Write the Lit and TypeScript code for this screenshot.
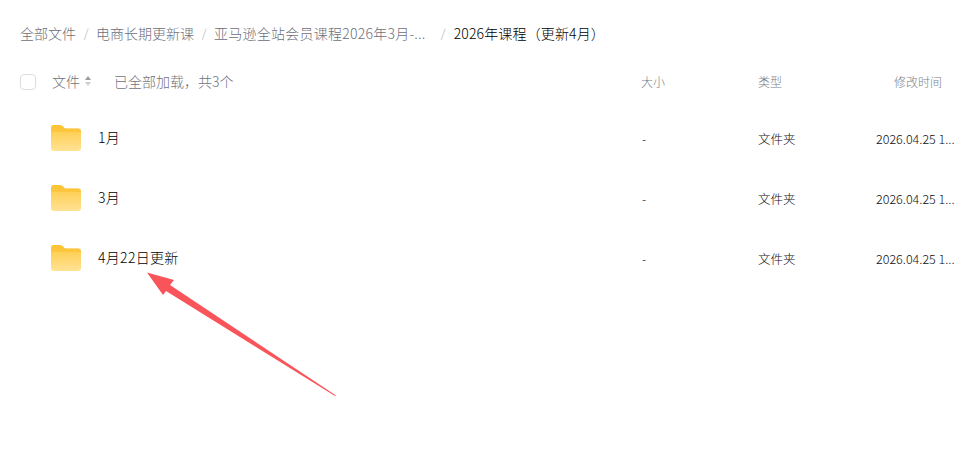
import { LitElement, html, css, svg } from "lit";
import { customElement } from "lit/decorators.js";

const crumbs = ["全部文件", "电商长期更新课", "亚马逊全站会员课程2026年3月-..."];
const rows = ["1月", "3月", "4月22日更新"];

const folder = svg`<svg class="folder" viewBox="0 0 30 26" width="30" height="26" aria-hidden="true">
  <defs>
    <linearGradient id="fg" x1="0" y1="0" x2="0" y2="1">
      <stop offset="0" stop-color="#fdc93f"/>
      <stop offset="1" stop-color="#ffe295"/>
    </linearGradient>
  </defs>
  <path d="M0 3 Q0 0 3 0 H9 Q11.500 0 13 2.500 Q13.500 3.500 15 3.500 H27 Q30 3.500 30 6.500 V23 Q30 26 27 26 H3 Q0 26 0 23 Z" fill="url(#fg)"/>
  <path d="M0 3 Q0 0 3 0 H9 Q11.500 0 13 2.500 Q13.500 3.500 15 3.500 H27 Q30 3.500 30 6.500 V7 H0 Z" fill="#fbbf2c" opacity=".55"/>
</svg>`;

@customElement("app-root")
export class AppRoot extends LitElement {
  static styles = css`
    :host {
      display: block;
      position: relative;
      width: 963px;
      height: 466px;
      overflow: hidden;
      background: #fff;
      font-family: "Noto Sans CJK SC", "Liberation Sans", sans-serif;
      font-weight: 300;
      color: #000;
    }
    .crumbs {
      display: flex;
      align-items: center;
      height: 20px;
      padding: 23px 0 0 20px;
      font-size: 14px;
      line-height: 20px;
      color: #6c707a;
      white-space: nowrap;
    }
    .sep {
      width: 20px;
      text-align: center;
      color: #a9acb3;
      font-size: 12px;
    }
    .sep.last {
      width: 13px;
      padding-left: 15px;
      text-align: left;
    }
    .wide {
      letter-spacing: 0.250px;
    }
    .current {
      color: #000;
      letter-spacing: 0.150px;
    }
    .grid {
      display: grid;
      grid-template-columns: 32px 589px 117px 118px 87px;
      align-items: center;
    }
    .head {
      margin: 29px 0 0 20px;
      height: 20px;
      font-size: 12px;
      line-height: 20px;
      color: #7b7e87;
    }
    .check {
      width: 16px;
      height: 16px;
      box-sizing: border-box;
      border: 1px solid #dcdde0;
      border-radius: 4px;
    }
    .title {
      display: flex;
      align-items: center;
      margin-top: -2px;
      font-size: 14px;
      color: #70737c;
    }
    .sort {
      display: flex;
      flex-direction: column;
      gap: 2px;
      margin: 0 0 0 5px;
    }
    .up {
      width: 0;
      height: 0;
      border: 3px solid transparent;
      border-top: 0;
      border-bottom: 4px solid #999ca3;
    }
    .down {
      width: 0;
      height: 0;
      border: 3px solid transparent;
      border-bottom: 0;
      border-top: 4px solid #cfd0d4;
    }
    .loaded {
      margin-left: 23px;
    }
    .time-h {
      padding-left: 18px;
    }
    .list {
      margin-top: 15px;
    }
    .row {
      margin-left: 20px;
      height: 60px;
      font-size: 12.500px;
      color: #0b0d13;
    }
    .name {
      display: flex;
      align-items: center;
      gap: 17px;
      grid-column: 1 / span 2;
      padding-left: 31px;
      font-size: 14px;
      letter-spacing: 0.300px;
      color: #000;
    }
    .folder {
      display: block;
      flex: none;
      margin-top: 1px;
    }
    .cell {
      margin-top: 2px;
    }
    .size {
      padding-left: 1px;
    }
    .time {
      white-space: nowrap;
    }
    .arrow {
      position: absolute;
      left: 0;
      top: 0;
      pointer-events: none;
    }
  `;

  render() {
    return html`
      <div class="crumbs">
        ${crumbs.map(
          (c, i) => html`<span class=${i === 2 ? "wide" : ""}>${c}</span><span class="sep ${i === 2 ? "last" : ""}">/</span>`
        )}
        <span class="current">2026年课程（更新4月）</span>
      </div>
      <div class="grid head">
        <div class="check"></div>
        <div class="title">
          <span>文件</span>
          <span class="sort"><i class="up"></i><i class="down"></i></span>
          <span class="loaded">已全部加载，共3个</span>
        </div>
        <div>大小</div>
        <div>类型</div>
        <div class="time-h">修改时间</div>
      </div>
      <div class="list">
        ${rows.map(
          (r) => html`<div class="grid row">
            <div class="name">${folder}<span>${r}</span></div>
            <div class="cell size">-</div>
            <div class="cell">文件夹</div>
            <div class="cell time">2026.04.25 1...</div>
          </div>`
        )}
      </div>
      <svg class="arrow" width="963" height="466" aria-hidden="true">
        <path d="M147 272.500 L174 280 L170 285 L336 395.500 L335 396 L166 291 L163 295 Z" fill="#f9545a"/>
      </svg>
    `;
  }
}
